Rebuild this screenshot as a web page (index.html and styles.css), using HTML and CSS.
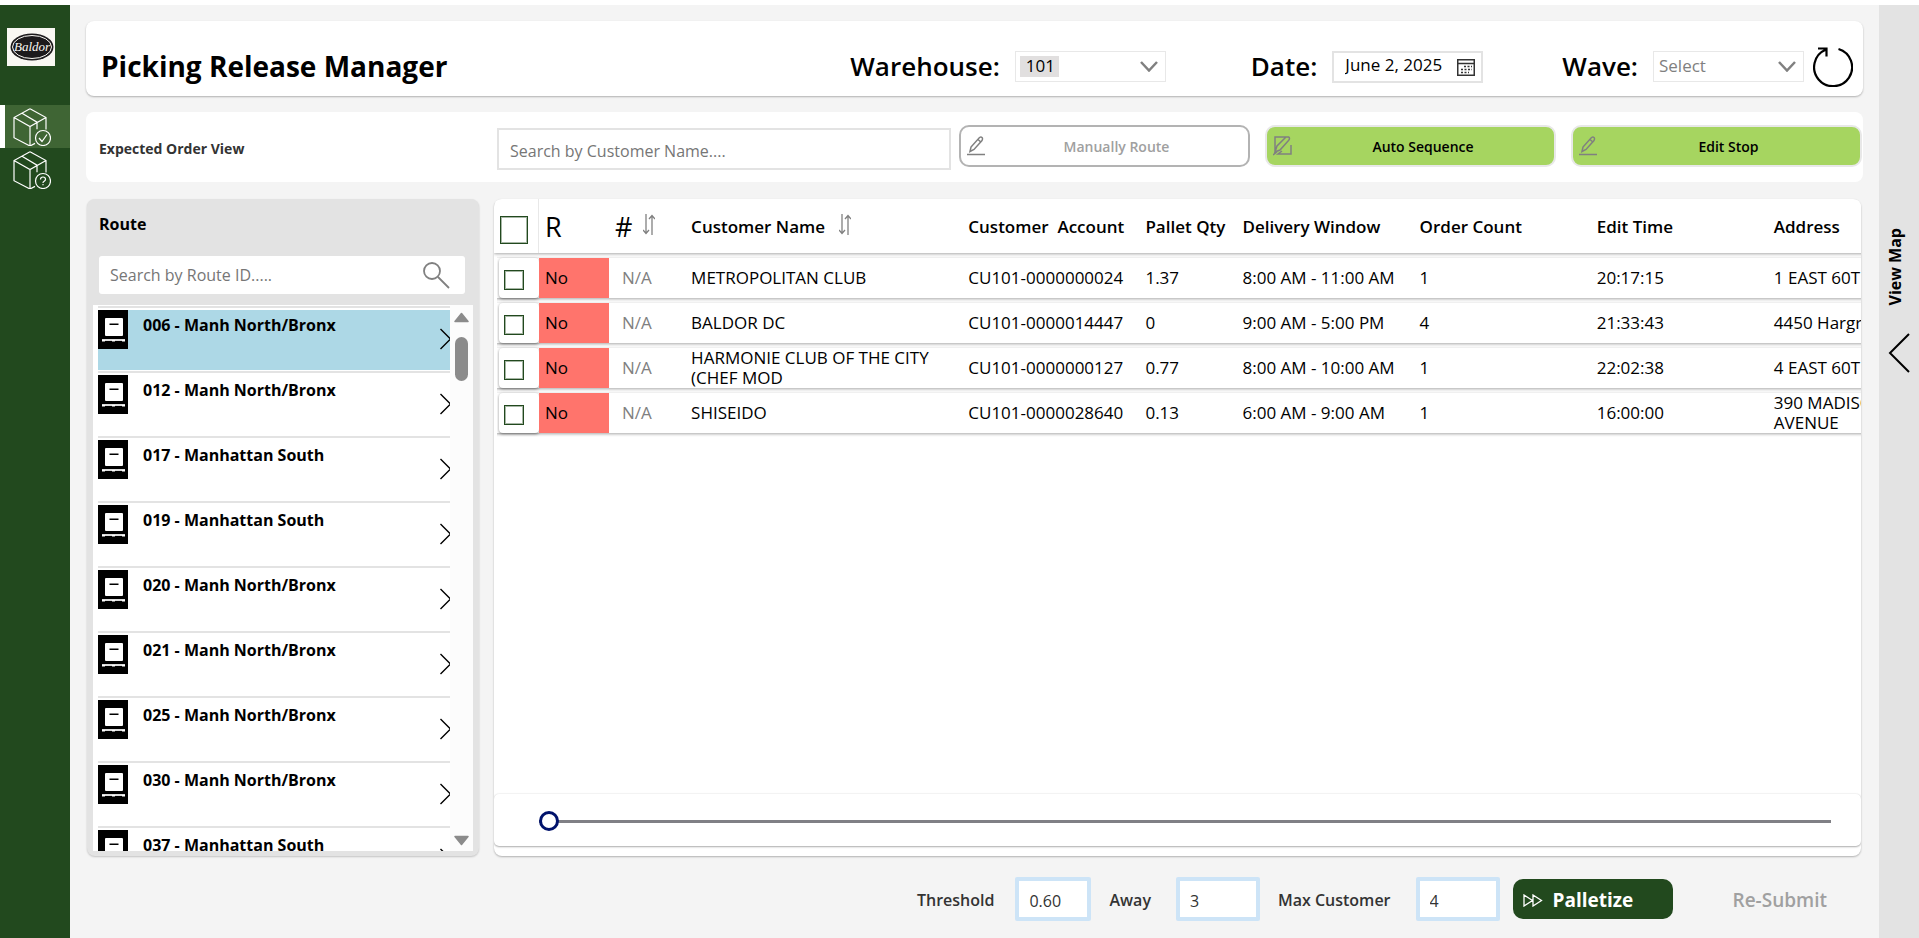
FILE: index.html
```html
<!DOCTYPE html>
<html lang="en">
<head>
    <meta charset="UTF-8">
    <title>Picking Release Manager</title>
    <meta name="viewport" content="width=device-width, initial-scale=1">
    <link rel="stylesheet" href="styles.css">
</head>
<body>
    <!-- shared icons -->
    <svg class="defs" width="0" height="0" aria-hidden="true">
        <symbol id="i-box" viewBox="0 0 38 38">
            <path d="M17 .8 1 9.5v20.2L17 38l5-2.600M17 .8 33 9.500v12M1 9.500l16 9 16-9M17 18.500V38M9 5.200l15 9v7"/>
            <circle cx="30" cy="30" r="7.5"/>
        </symbol>
        <symbol id="i-sort" viewBox="0 0 12 21">
            <path d="M3 0v19M0 16l3 3.500 3-3.500M9 21V2M6 5l3-3.500L12 5"/>
        </symbol>
        <symbol id="i-down" viewBox="0 0 18 11">
            <path d="M1 1l8 8.500L17 1"/>
        </symbol>
        <symbol id="i-pencil" viewBox="0 0 18 20">
            <path d="M3 15.500 4 11 12.500 1.500q1.500-1 2.500 0t0 3L7 13.500zM11 3.500l2.800 2.500M0 18.500h18"/>
        </symbol>
        <symbol id="i-pallet" viewBox="0 0 30 39">
            <path fill="#000" d="M0 0h30v39H0z"/>
            <rect x="7" y="8" width="18" height="18" rx="1" fill="#fff"/>
            <path fill="#000" d="M11.500 13.500h9V15h-9z"/>
            <path fill="#ddd" d="M4 29h23v2H4z"/>
            <path fill="#fff" d="M4 30h3v1.500H4zM14 30h3v1.500h-3zM24 30h3v1.500h-3z"/>
        </symbol>
        <symbol id="i-next" viewBox="0 0 10 22">
            <path d="M.5 1 10.500 11 .5 21"/>
        </symbol>
    </svg>

    <div class="app">
        <nav class="sidebar">
            <a class="logo" href="#" aria-label="Home">
                <svg width="48" height="38" viewBox="0 0 48 38">
                    <ellipse cx="25" cy="19" rx="21.500" ry="13.500" fill="#1c1a1c"/>
                    <ellipse cx="25" cy="19" rx="19.500" ry="11.500" fill="none" stroke="#f9f8f3"/>
                    <text class="logo-text" x="25" y="23" text-anchor="middle">Baldor</text>
                </svg>
            </a>
            <a class="nav-item active" href="#" aria-label="Release">
                <svg class="line" width="38" height="38"><use href="#i-box"/><path d="M26 30l3 3.500 5-7"/></svg>
            </a>
            <a class="nav-item" href="#" aria-label="Pending">
                <svg class="line" width="38" height="38"><use href="#i-box"/><path d="M27.500 28.500q0-2.500 2.500-2.500t2.500 2.300q0 1.200-1.300 2t-1.200 1.700M30 33v1.200"/></svg>
            </a>
        </nav>

        <main class="main">
            <header class="header card">
                <h1>Picking Release Manager</h1>
                <div class="field field-wh">
                    <label for="warehouse">Warehouse:</label>
                    <div class="select chip">
                        <select id="warehouse"><option>101</option></select>
                        <svg width="18" height="11"><use href="#i-down"/></svg>
                    </div>
                </div>
                <div class="field">
                    <label for="date">Date:</label>
                    <div class="date">
                        <input type="text" id="date" value="June 2, 2025">
                        <svg width="18" height="17" viewBox="0 0 18 17">
                            <rect x=".75" y=".75" width="16.500" height="15.500"/>
                            <path d="M1 4.500h16"/>
                            <path stroke-dasharray="2 1.500" d="M7 7.500h8M4 10.500h11M4 13.500h8"/>
                        </svg>
                    </div>
                </div>
                <div class="field">
                    <label for="wave">Wave:</label>
                    <div class="select empty">
                        <select id="wave"><option>Select</option></select>
                        <svg width="18" height="11"><use href="#i-down"/></svg>
                    </div>
                </div>
                <button class="refresh" aria-label="Refresh">
                    <svg width="40" height="40" viewBox="0 0 40 40"><path d="M25.500 2A19 19 0 1 1 12.500 2.800M5 1.500h8.500v8"/></svg>
                </button>
            </header>

            <section class="toolbar">
                <h2>Expected Order View</h2>
                <input type="text" class="customer-search" placeholder="Search by Customer Name...." aria-label="Search by Customer Name">
                <button class="tool" disabled>
                    <svg width="18" height="20"><use href="#i-pencil"/></svg><span>Manually Route</span>
                </button>
                <button class="tool green">
                    <svg width="19" height="20" viewBox="0 0 19 20"><path d="M2 17V1h13.500q2 1 0 3.500L7 14l-5 2 2-6 9-9M0 19l4-3M18 9v9H5l4-3"/></svg><span>Auto Sequence</span>
                </button>
                <button class="tool green">
                    <svg width="18" height="20"><use href="#i-pencil"/></svg><span>Edit Stop</span>
                </button>
            </section>

            <div class="content">
                <aside class="routes">
                    <h2>Route</h2>
                    <div class="route-search">
                        <input type="text" placeholder="Search by Route ID....." aria-label="Search by Route ID">
                        <svg width="27" height="27" viewBox="0 0 27 27"><circle cx="9" cy="9" r="8"/><path d="M15 15l11 11"/></svg>
                    </div>
                    <div class="list">
                        <ul id="routeList"></ul>
                        <div class="scroll">
                            <svg width="15" height="11" viewBox="0 0 15 11"><path d="M7.500 1.500 14 9.500H1z"/></svg>
                            <div class="thumb"></div>
                            <svg class="end" width="15" height="11" viewBox="0 0 15 11"><path d="M7.500 9.500 14 1.500H1z"/></svg>
                        </div>
                    </div>
                </aside>

                <section class="orders card">
                    <div class="table-wrap">
                        <table>
                            <colgroup>
                                <col class="c-tick"><col class="c-r"><col class="c-num"><col class="c-name"><col class="c-acc">
                                <col class="c-qty"><col class="c-std"><col class="c-std"><col class="c-std"><col class="c-std">
                            </colgroup>
                            <thead>
                                <tr>
                                    <th class="tick-head"><input type="checkbox" class="big" aria-label="Select all"></th>
                                    <th class="large">R</th>
                                    <th class="large"># <svg class="sort" width="12" height="21"><use href="#i-sort"/></svg></th>
                                    <th>Customer Name <svg class="sort" width="12" height="21"><use href="#i-sort"/></svg></th>
                                    <th>Customer&nbsp; Account</th>
                                    <th>Pallet Qty</th>
                                    <th>Delivery Window</th>
                                    <th>Order Count</th>
                                    <th>Edit Time</th>
                                    <th>Address</th>
                                </tr>
                            </thead>
                            <tbody id="orderRows"></tbody>
                        </table>
                    </div>
                    <div class="slider">
                        <input type="range" min="0" max="100" value="0" aria-label="Scroll columns">
                    </div>
                </section>
            </div>

            <footer class="footer">
                <label for="threshold">Threshold</label>
                <input type="text" id="threshold" class="narrow" value="0.60">
                <label for="away">Away</label>
                <input type="text" id="away" value="3">
                <label for="maxCustomer">Max Customer</label>
                <input type="text" id="maxCustomer" value="4">
                <button class="palletize">
                    <svg width="20" height="13" viewBox="0 0 20 13"><path d="M1 1v11l8.500-5.500zM10 1v11l8.500-5.500z"/></svg>Palletize
                </button>
                <button class="resubmit" disabled>Re-Submit</button>
            </footer>
        </main>

        <aside class="map">
            <span>View Map</span>
            <button aria-label="Open map">
                <svg width="22" height="40" viewBox="0 0 22 40"><path d="M21 1 2 20l19 19"/></svg>
            </button>
        </aside>
    </div>

    <script>
        const routes = [
            '006 - Manh North/Bronx', '012 - Manh North/Bronx', '017 - Manhattan South',
            '019 - Manhattan South', '020 - Manh North/Bronx', '021 - Manh North/Bronx',
            '025 - Manh North/Bronx', '030 - Manh North/Bronx', '037 - Manhattan South'
        ];
        const orders = [
            ['METROPOLITAN CLUB', 'CU101-0000000024', '1.37', '8:00 AM - 11:00 AM', '1', '20:17:15', '1 EAST 60TH ST'],
            ['BALDOR DC', 'CU101-0000014447', '0', '9:00 AM - 5:00 PM', '4', '21:33:43', '4450 Hargrove'],
            ['HARMONIE CLUB OF THE CITY (CHEF MOD', 'CU101-0000000127', '0.77', '8:00 AM - 10:00 AM', '1', '22:02:38', '4 EAST 60TH ST'],
            ['SHISEIDO', 'CU101-0000028640', '0.13', '6:00 AM - 9:00 AM', '1', '16:00:00', '390 MADISON AVENUE']
        ];

        document.getElementById('routeList').innerHTML = routes.map((r, i) =>
            `<li class="${i === 0 ? 'selected' : ''}"><a href="#">
                <svg width="30" height="39"><use href="#i-pallet"/></svg>
                <span>${r}</span>
                <svg class="next" width="10" height="22"><use href="#i-next"/></svg>
            </a></li>`).join('');

        document.getElementById('orderRows').innerHTML = orders.map(o =>
            `<tr><td class="tick-cell"><div><input type="checkbox" aria-label="${o[0]}"></div></td>
            <td class="no">No</td><td class="na">N/A</td>
            ${o.map(v => `<td>${v}</td>`).join('')}</tr>`).join('');
    </script>
</body>
</html>
```
FILE: styles.css
```css
* { box-sizing: border-box; }
body {
    margin: 0;
    padding-top: 5px;
    background: #fff;
    color: #000;
    font-family: "Open Sans", "Noto Sans", sans-serif;
    font-size: 16px;
}
h1, h2, ul { margin: 0; padding: 0; }
input, select, button { font-family: inherit; font-size: 16px; }
button { cursor: pointer; }
svg { display: block; flex: none; fill: none; stroke: #808080; }
.defs { position: absolute; }

.app { display: flex; height: calc(100vh - 5px); min-height: 600px; }
.card {
    background: #fff;
    border-radius: 8px;
    box-shadow: 0 1px 2px rgba(0, 0, 0, .28);
}

/* left nav */
.sidebar { width: 70px; flex: none; background: #22491e; }
.logo { display: block; width: 48px; margin: 23px 0 39px 7px; background: #f9f8f3; }
.logo svg { stroke: none; }
.logo-text { font: 13px "Liberation Serif", serif; font-style: italic; fill: #f9f8f3; }
.nav-item { display: block; height: 43px; padding: 3px 0 0 13px; }
.nav-item.active { background: #3f6534; border-left: 5px solid #fff; padding-left: 8px; }
.line { stroke: #fff; stroke-width: 1.2; }

.main {
    flex: 1;
    min-width: 0;
    display: flex;
    flex-direction: column;
    padding: 16px 16px 0;
    background: #f4f4f4;
}

/* header */
.header {
    display: flex;
    align-items: center;
    height: 75px;
    padding: 16px 10px 0 15px;
}
.header h1 { flex: 1; padding-bottom: 2px; font-size: 28px; line-height: 36px; white-space: nowrap; }
.field { display: flex; align-items: center; gap: 15px; margin-left: 79px; }
.field-wh { margin-right: 6px; }
.field label { padding-bottom: 2px; font-size: 26px; line-height: 36px; font-weight: 600; }
.select, .date { position: relative; width: 151px; height: 31px; }
.select select {
    appearance: none;
    width: 100%;
    height: 100%;
    padding: 0 30px 2px 5px;
    border: 1px solid #e8e8e8;
    border-radius: 0;
    background: #fff;
    font-size: 17px;
}
.select.chip select {
    padding-left: 10px;
    background: linear-gradient(#e1dfdf, #e1dfdf) 4px 4px / 39px 21px no-repeat #fff;
}
.select.empty select { color: #808080; }
.select svg { position: absolute; right: 8px; top: 10px; stroke-width: 2.5; pointer-events: none; }
.date input {
    width: 100%;
    height: 32px;
    padding: 0 32px 5px 11px;
    border: 2px solid #e3e3e3;
    font-size: 17px;
}
.date svg { position: absolute; right: 8px; top: 8px; stroke: #333; stroke-width: 1.5; }
.refresh { margin-left: 9px; padding: 0; border: 0; background: none; }
.refresh svg { stroke: #000; stroke-width: 2.2; }

/* toolbar */
.toolbar {
    display: flex;
    gap: 15px;
    height: 70px;
    margin-top: 16px;
    padding: 13px 1px 0 13px;
    background: #fff;
    border-radius: 8px;
}
.toolbar h2 { width: 383px; font-size: 14px; line-height: 48px; color: #333; }
.customer-search {
    flex: 1;
    height: 42px;
    margin: 3px -7px 0 0;
    padding: 4px 11px 0;
    border: 2px solid #e3e3e3;
}
::placeholder { color: #767676; opacity: 1; }
.tool {
    display: flex;
    align-items: center;
    width: 291px;
    height: 42px;
    padding: 0 0 0 6px;
    border: 2px solid #b3b3b3;
    border-radius: 10px;
    background: #fff;
    color: #a0a0a0;
    font-size: 14px;
    font-weight: 600;
}
.tool span { flex: 1; text-align: center; }
.tool svg { stroke-width: 1.5; }
.tool.green { border-color: #e8e8e8; background: #a6d560; color: #000; }

.content { flex: 1; min-height: 0; display: flex; gap: 15px; margin-top: 17px; padding: 0 2px 0 1px; }

/* route list */
.routes {
    display: flex;
    flex-direction: column;
    width: 392px;
    padding: 13px 6px 5px;
    background: #e3e3e3;
    border-radius: 8px;
    box-shadow: 0 1px 2px rgba(0, 0, 0, .2);
}
.routes h2 { padding-left: 6px; font-size: 16px; line-height: 24px; }
.route-search { position: relative; margin: 20px 8px 11px 6px; }
.route-search input { width: 100%; height: 38px; padding: 0 44px 0 11px; border: 0; border-radius: 3px; }
.route-search svg { position: absolute; right: 15px; top: 6px; stroke-width: 1.8; }
.list { flex: 1; min-height: 0; display: flex; background: #fff; }
.list ul { flex: 1; padding: 1px 0 0 5px; overflow: hidden; list-style: none; }
.list li { height: 65px; padding-top: 2px; border-top: 2px solid #e3e3e3; }
.list a { display: flex; height: 60px; padding-bottom: 2px; color: #000; text-decoration: none; font-weight: 700; }
.list a span { flex: 1; padding-left: 15px; line-height: 30px; }
.list .selected a { background: #add8e6; }
.next { align-self: center; stroke: #000; stroke-width: 1.4; }
.list a svg:first-child { stroke: none; }
.scroll { display: flex; flex-direction: column; align-items: center; width: 23px; padding: 7px 0 5px; background: #fcfcfc; }
.scroll svg { fill: #8b8b8b; stroke: #8b8b8b; stroke-linejoin: round; stroke-width: 1.5; }
.scroll .end { margin-top: auto; }
.thumb { width: 13px; height: 44px; margin-top: 14px; border-radius: 7px; background: #8b8b8b; }

/* orders table */
.orders { flex: 1; min-width: 0; display: flex; flex-direction: column; overflow: hidden; padding-bottom: 10px; }
.table-wrap { flex: 1; min-height: 0; overflow: hidden; }
table { width: 1450px; table-layout: fixed; border-collapse: separate; border-spacing: 0 5px; margin-top: -5px; }
.c-tick { width: 45px; }
.c-r { width: 70px; }
.c-num { width: 75px; }
.c-name { width: 277px; }
.c-acc { width: 177px; }
.c-qty { width: 97px; }
.c-std { width: 177px; }
tr { background: #fff; box-shadow: 0 1px 3px rgba(0, 0, 0, .35); }
tbody tr { clip-path: inset(-4px 0 -4px 3px); }
th, td { height: 40px; padding: 0 7px; text-align: left; line-height: 20px; }
th { height: 54px; padding-top: 2px; font-size: 17px; font-weight: 600; white-space: nowrap; }
th.large { font-size: 27px; font-weight: 400; padding-left: 6px; }
td { font-size: 17px; }
.sort { display: inline-block; margin: -3px 0 0 10px; vertical-align: -2px; stroke-width: 1.3; }
th.large .sort { margin-left: 3px; vertical-align: 2px; }
.tick-head { padding: 7px 0 0 6px; border-right: 1px solid #e8e8e8; }
.tick-cell { padding: 0 0 0 5px; background: #fff; }
.tick-cell div {
    display: flex;
    align-items: center;
    height: 40px;
    padding-left: 5px;
    border-radius: 4px;
    box-shadow: 0 1px 3px rgba(0, 0, 0, .45);
}
.no { padding-left: 6px; background: #ff746c; }
.na { padding-left: 13px; color: #808080; }
input[type="checkbox"] {
    appearance: none;
    display: block;
    width: 20px;
    height: 20px;
    margin: 4px 0 0;
    border: 1px solid #22491e;
    outline: 1px solid #a7b6a5;
    outline-offset: -2px;
    background: #fff;
}
input[type="checkbox"].big { width: 28px; height: 28px; margin: 0; border-width: 2px; }

.slider {
    height: 52px;
    padding: 17px 30px 0 45px;
    border-radius: 5px;
    box-shadow: 0 1px 2px rgba(0, 0, 0, .3), 0 0 2px rgba(0, 0, 0, .12);
}
.slider input { display: block; appearance: none; width: 100%; height: 21px; margin: 0; background: none; }
.slider input::-webkit-slider-runnable-track { height: 3px; background: #808085; }
.slider input::-webkit-slider-thumb {
    appearance: none;
    width: 20px;
    height: 20px;
    margin-top: -9px;
    border: 3px solid #00126b;
    border-radius: 50%;
    background: #fff;
}

/* footer */
.footer { display: flex; align-items: center; justify-content: flex-end; height: 82px; padding: 4px 36px 0 0; }
.footer label { padding-top: 1px; color: #333; font-weight: 600; }
.footer input {
    width: 84px;
    height: 44px;
    margin: 0 18px 0 25px;
    padding: 3px 0 0 10px;
    border: 4px solid #cde4f7;
    border-radius: 2px;
    color: #333;
}
.footer .narrow { width: 76px; margin-left: 21px; }
.palletize {
    display: flex;
    align-items: center;
    gap: 10px;
    width: 160px;
    height: 40px;
    padding: 2px 10px 0;
    border: 0;
    border-radius: 10px;
    background: #22491e;
    color: #fff;
    font-size: 19px;
    font-weight: 700;
}
.palletize svg { stroke: #fff; stroke-width: 1.3; }
.footer #maxCustomer { margin-right: 13px; }
.resubmit { margin-left: 60px; padding: 2px 0 0; border: 0; background: none; color: #a0a0a0; font-size: 19px; font-weight: 600; }

/* map drawer */
.map { width: 40px; flex: none; padding: 223px 0 0 4px; background: #e3e3e3; }
.map span {
    display: block;
    writing-mode: vertical-rl;
    transform: rotate(180deg);
    font-size: 16px;
    line-height: 24px;
    font-weight: 700;
}
.map button { display: block; margin-top: 28px; padding: 0 0 0 5px; border: 0; background: none; }
.map svg { stroke: #000; stroke-width: 2; }
```
